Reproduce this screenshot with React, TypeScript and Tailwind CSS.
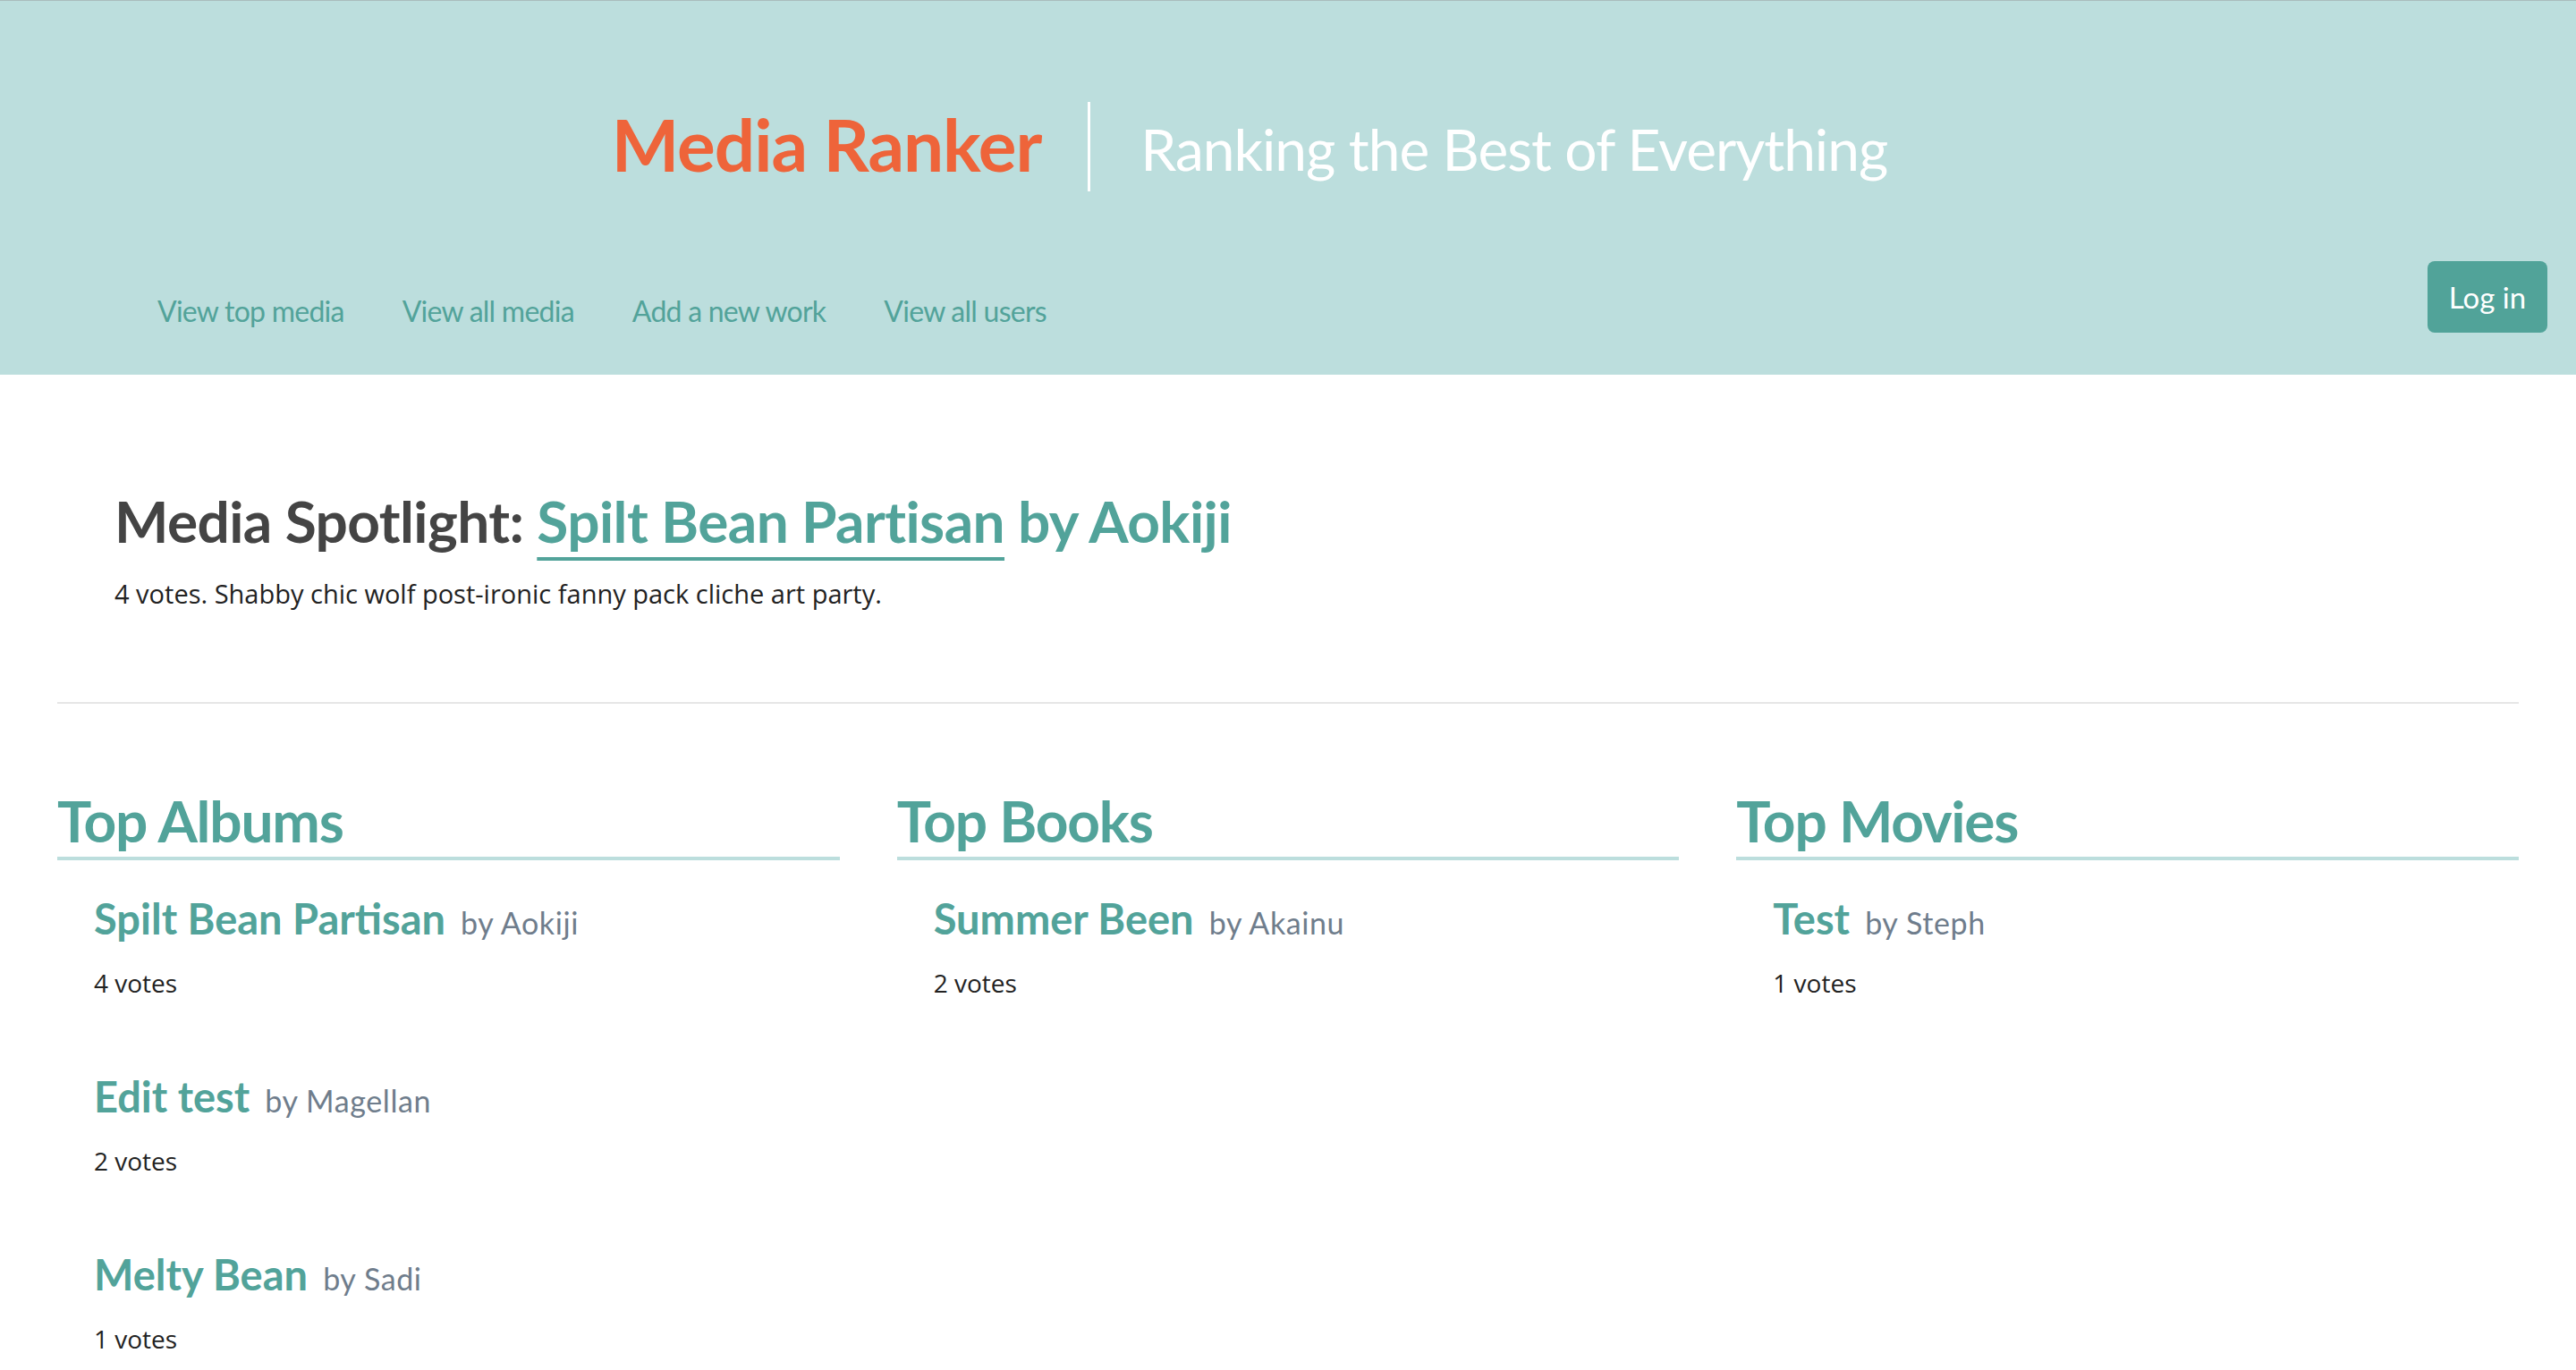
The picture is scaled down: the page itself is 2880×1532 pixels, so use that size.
const NAV_LINKS = ['View top media', 'View all media', 'Add a new work', 'View all users'];

const TOP_LISTS = [
  {
    title: 'Top Albums',
    items: [
      { name: 'Spilt Bean Partisan', by: 'Aokiji', votes: 4 },
      { name: 'Edit test', by: 'Magellan', votes: 2 },
      { name: 'Melty Bean', by: 'Sadi', votes: 1 },
    ],
  },
  {
    title: 'Top Books',
    items: [{ name: 'Summer Been', by: 'Akainu', votes: 2 }],
  },
  {
    title: 'Top Movies',
    items: [{ name: 'Test', by: 'Steph', votes: 1 }],
  },
];

function Header() {
  return (
    <header className="h-[419px] border-t border-[#a9bcbc] bg-[#bcdedd]">
      {/* Brand row */}
      <div className="mt-[113px] flex h-[100px] items-center justify-center pr-[86px]">
        <h1 className="-mt-[6px] text-[80px] font-bold leading-none tracking-[-1px] text-[#ee643a]">Media Ranker</h1>
        <div className="ml-[52px] h-[100px] w-[3px] bg-white" />
        <span className="ml-[56px] mt-[6px] text-[64px] leading-none tracking-[-1px] text-white">Ranking the Best of Everything</span>
      </div>

      {/* Nav row */}
      <div className="mt-[78px] flex h-[80px] items-center justify-between pl-[176px] pr-[32px]">
        <nav className="flex gap-[65px] pt-[32px]">
          {NAV_LINKS.map(l => (
            <a key={l} href="#" className="text-[32px] leading-none tracking-[-0.75px] text-[#52a39a]">{l}</a>
          ))}
        </nav>
        <button className="h-[80px] w-[134px] rounded-[8px] bg-[#51a399] text-[33px] leading-none text-white">Log in</button>
      </div>
    </header>
  );
}

export default function App() {
  return (
    <div className="min-h-screen bg-white font-['Lato',sans-serif]">
      <Header />

      <main className="px-[64px]">
        {/* Spotlight */}
        <section className="pl-[64px]">
          <h2 className="mt-[132px] text-[64px] font-bold leading-none tracking-[-0.6px] text-[#444444]">
            Media Spotlight:{' '}
            <a href="#" className="text-[#52a39a] underline decoration-[4px] underline-offset-[16px]">Spilt Bean Partisan</a>
            <span className="text-[#52a39a]"> by Aokiji</span>
          </h2>
          <p className="mt-[29px] font-['Open_Sans',sans-serif] text-[29px] leading-[40px] text-[#222222]">
            4 votes. Shabby chic wolf post-ironic fanny pack cliche art party.
          </p>
        </section>

        <hr className="mt-[101px] border-t-2 border-[#e6e6e6]" />

        {/* Top lists */}
        <div className="mt-[99px] grid grid-cols-3 gap-[64px]">
          {TOP_LISTS.map(list => (
            <section key={list.title}>
              <h2 className="border-b-[4px] border-[#bcdedd] pb-[8px] text-[64px] font-bold leading-none tracking-[-1.2px] text-[#52a39a]">{list.title}</h2>
              <ul className="mt-[37px] flex flex-col gap-[79px] pl-[41px]">
                {list.items.map(item => (
                  <li key={item.name}>
                    <div className="text-[47px] leading-[56px]">
                      <a href="#" className="font-bold text-[#52a39a]">{item.name}</a>{' '}
                      <span className="ml-[5px] text-[34px] leading-none tracking-[0.6px] text-[#6f7d8c]">by {item.by}</span>
                    </div>
                    <p className="mt-[24px] font-['Open_Sans',sans-serif] text-[28px] leading-[40px] text-[#222222]">{item.votes} votes</p>
                  </li>
                ))}
              </ul>
            </section>
          ))}
        </div>
      </main>
    </div>
  );
}
